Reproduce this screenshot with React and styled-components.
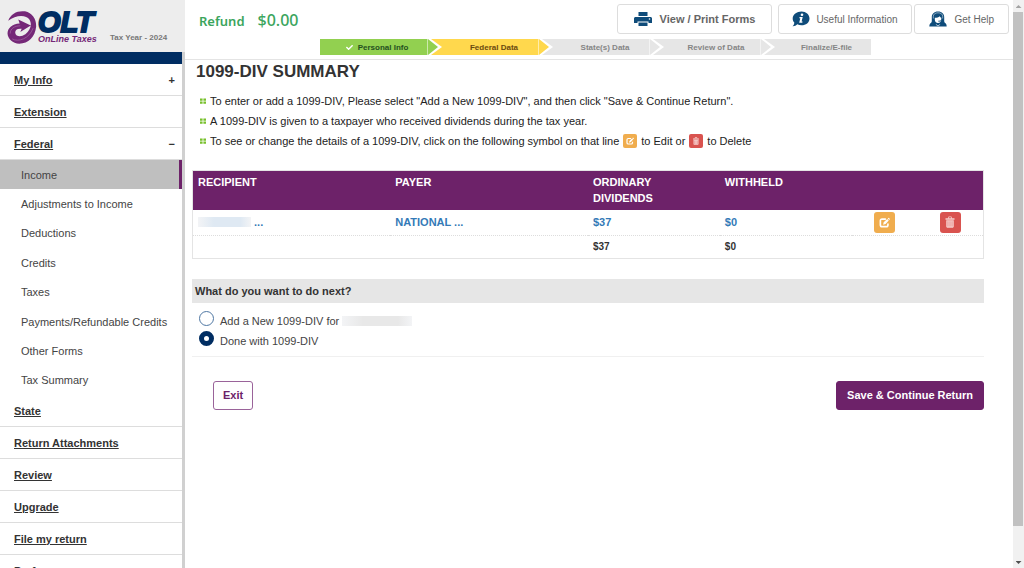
import { useState } from "react";
import styled, { createGlobalStyle } from "styled-components";
import { FaCheck } from "react-icons/fa";

const federalItems = [
  "Income",
  "Adjustments to Income",
  "Deductions",
  "Credits",
  "Taxes",
  "Payments/Refundable Credits",
  "Other Forms",
  "Tax Summary",
];

const lowerItems = [
  "State",
  "Return Attachments",
  "Review",
  "Upgrade",
  "File my return",
  "Preferences",
];

const steps = [
  { label: "Personal Info", bg: "#92d050", color: "#25501f", done: true },
  { label: "Federal Data", bg: "#ffd84d", color: "#6b4a10" },
  { label: "State(s) Data", bg: "#e6e6e6", color: "#858585" },
  { label: "Review of Data", bg: "#e6e6e6", color: "#858585" },
  { label: "Finalize/E-file", bg: "#e6e6e6", color: "#858585" },
];

function LogoMark() {
  return (
    <svg width="30" height="33" viewBox="20 33 86 98" aria-hidden="true">
      <path
        fill="#752878"
        d="M22 62C30 40 50 31 72 34C94 39 106 58 105 80C102 110 82 130 55 130C35 130 21 116 20 100C20 84 33 71 56 70L52 58L89 76L58 95L62 86C48 84 42 91 43 98C45 109 60 111 73 102C88 91 94 72 85 58C76 44 45 43 22 62Z"
      />
      <path
        fill="none"
        stroke="#a56ba6"
        strokeWidth="2"
        d="M28 100C28 86 40 77 58 77M34 116C52 126 84 116 96 84"
      />
    </svg>
  );
}

function PrintIcon() {
  return (
    <svg width="18" height="16" viewBox="0 0 18 16" aria-hidden="true">
      <path
        fill="#0f4c7a"
        d="M4.500 1H13.500V5H4.500ZM1.500 6H16.500C17.300 6 18 6.700 18 7.500V12H14.500V10.500H3.500V12H0V7.500C0 6.700 0.700 6 1.500 6ZM4.500 11.500H13.500V15H4.500Z"
      />
      <circle cx="15.500" cy="8" r="0.800" fill="#fff" />
    </svg>
  );
}

function InfoIcon() {
  return (
    <svg width="18" height="16" viewBox="0 0 18 16" aria-hidden="true">
      <path
        fill="#0f4c7a"
        d="M9.5 0.5C14 0.5 17.5 3.6 17.5 7.4C17.5 11.3 14 14.3 9.5 14.3C8 14.3 6.5 14 5.3 13.3C4.2 14.6 2.4 15.3 0.6 15.2C1.6 14.2 2.2 13 2.3 11.4C1.2 10.3 0.7 9 0.7 7.4C0.7 3.6 4.8 0.5 9.5 0.5Z"
      />
      <circle cx="10" cy="3.7" r="1.3" fill="#fff" />
      <path fill="#fff" d="M7.6 6H10.7L9.6 10.5H10.6L10.3 11.8H7.2L8.3 7.3H7.3Z" />
    </svg>
  );
}

function HelpIcon() {
  return (
    <svg width="18" height="16" viewBox="0 0 18 16" aria-hidden="true">
      <path
        fill="#0f4c7a"
        d="M9 0.5C5 0.5 2.8 3 2.8 6.2V9.8C2.8 11.3 2.2 12 1.2 12.6C0.6 13.3 0.3 14.3 0.3 15.500H17.7C17.7 14.3 17.4 13.3 16.8 12.6C15.8 12 15.2 11.3 15.2 9.8V6.2C15.2 3 13 0.5 9 0.5Z"
      />
      <path
        fill="#fff"
        d="M5.8 6.8C8 6.700 9.600 6.200 10.600 5.200C11.100 6 11.600 6.500 12.300 6.800V8.500C12.300 10.500 11 12 9 12C7 12 5.800 10.500 5.800 8.500Z"
      />
      <path
        fill="none"
        stroke="#0f4c7a"
        d="M12.8 8.5C12.3 9.8 11.4 10.2 9.4 10.2"
      />
      <path
        fill="none"
        stroke="#fff"
        strokeWidth="0.5"
        d="M4.300 7.500V5.500C4.300 3.200 6.200 1.800 9 1.800S13.700 3.200 13.700 5.500V7.500"
      />
      <path fill="#fff" d="M7 13.200L9 14.500L11 13.200L11.200 13.700L9.200 15.100H8.800L6.800 13.700Z" />
    </svg>
  );
}

function EditIcon({ size }) {
  return (
    <svg width={size} height={size} viewBox="0 0 16 16" aria-hidden="true">
      <path
        fill="none"
        stroke="#fff"
        strokeWidth="2.4"
        d="M10 3H4.500C3 3 2 4 2 5.500V11.500C2 13 3 14 4.500 14H10.500C12 14 13 13 13 11.500V9.500"
      />
      <path
        fill="#fff"
        d="M6 11.300L6.800 7.800L12 3L14.200 5.200L9.600 10.200ZM12.700 2.300L14 1L16 3L14.800 4.400Z"
      />
    </svg>
  );
}

function TrashIcon({ size }) {
  return (
    <svg width={size} height={size} viewBox="0 0 16 16" aria-hidden="true">
      <path
        fill="#f6cfcd"
        fillRule="evenodd"
        d="M2 3H5.500V1.500L6.300 0.700H9.700L10.500 1.500V3H14V5H2ZM6.500 3H9.500V1.800H6.500Z"
      />
      <path
        fill="#f6cfcd"
        fillRule="evenodd"
        d="M3 5.500H13V14.300L12 15.500H4L3 14.300ZM5 7V14H5.600V7ZM7.700 7V14H8.300V7ZM10.400 7V14H11V7Z"
      />
    </svg>
  );
}

function BulletIcon() {
  return (
    <svg width="6" height="6" viewBox="0 0 6 6" aria-hidden="true">
      <path
        fill="#78c02c"
        d="M0 0.500H2.600V2.700H0ZM3.400 0.500H6V2.700H3.400ZM0 3.500H2.600V5.700H0ZM3.400 3.500H6V5.700H3.400Z"
      />
    </svg>
  );
}

function Sidebar() {
  return (
    <Side>
      <Brand>
        <LogoMark />
        <BrandText>
          <BrandName>OLT</BrandName>
          <BrandSub>OnLine Taxes</BrandSub>
        </BrandText>
        <TaxYear>Tax Year - 2024</TaxYear>
      </Brand>
      <Nav>
        <NavBar />
        <NavRow>
          <NavLink href="#my-info">My Info</NavLink>
          <Sign>+</Sign>
        </NavRow>
        <NavRow>
          <NavLink href="#extension">Extension</NavLink>
        </NavRow>
        <NavRow>
          <NavLink href="#federal">Federal</NavLink>
          <Sign>−</Sign>
        </NavRow>
        <SubList>
          {federalItems.map((item, i) => (
            <SubLink key={item} href="#federal" $active={i === 0}>
              {item}
            </SubLink>
          ))}
        </SubList>
        {lowerItems.map((item) => (
          <NavRow key={item}>
            <NavLink href="#nav">{item}</NavLink>
          </NavRow>
        ))}
      </Nav>
    </Side>
  );
}

function TopBar() {
  return (
    <Header>
      <HeaderRow>
        <RefundLabel>Refund</RefundLabel>
        <RefundValue>$0.00</RefundValue>
        <Actions>
          <ActionButton type="button" $strong>
            <PrintIcon />
            View / Print Forms
          </ActionButton>
          <ActionButton type="button">
            <InfoIcon />
            Useful Information
          </ActionButton>
          <ActionButton type="button" $last>
            <HelpIcon />
            Get Help
          </ActionButton>
        </Actions>
      </HeaderRow>
      <Steps>
        {steps.map((step, i) => (
          <Step
            key={step.label}
            $bg={step.bg}
            $color={step.color}
            $first={i === 0}
            $last={i === steps.length - 1}
          >
            {step.done && <FaCheck size={7} color="#fff" />}
            {step.label}
          </Step>
        ))}
      </Steps>
    </Header>
  );
}

function SummaryTable() {
  return (
    <Table>
      <colgroup>
        <Col $span={3} />
        <Col $span={3} />
        <Col $span={2} />
        <Col $span={2} />
        <Col $span={1} />
        <Col $span={1} />
      </colgroup>
      <thead>
        <tr>
          <Th>RECIPIENT</Th>
          <Th>PAYER</Th>
          <Th>
            ORDINARY
            <br />
            DIVIDENDS
          </Th>
          <Th>WITHHELD</Th>
          <Th />
          <Th />
        </tr>
      </thead>
      <tbody>
        <Row>
          <Td>
            <RowLink href="#recipient">
              <Redacted $width="53px" $color="#dfe9f3" /> ...
            </RowLink>
          </Td>
          <Td>
            <RowLink href="#payer">NATIONAL ...</RowLink>
          </Td>
          <Td>
            <RowLink href="#dividends">$37</RowLink>
          </Td>
          <Td>
            <RowLink href="#withheld">$0</RowLink>
          </Td>
          <IconCell>
            <IconButton type="button" aria-label="Edit" $bg="#f0ad4e">
              <EditIcon size={11} />
            </IconButton>
          </IconCell>
          <IconCell>
            <IconButton type="button" aria-label="Delete" $bg="#d9534f">
              <TrashIcon size={12} />
            </IconButton>
          </IconCell>
        </Row>
        <TotalRow>
          <Td />
          <Td />
          <Td>$37</Td>
          <Td>$0</Td>
          <Td />
          <Td />
        </TotalRow>
      </tbody>
    </Table>
  );
}

function NextStep() {
  const [choice, setChoice] = useState("done");

  return (
    <Question>
      <Legend>What do you want to do next?</Legend>
      <Option>
        <Radio
          type="radio"
          name="next"
          checked={choice === "add"}
          onChange={() => setChoice("add")}
        />
        <OptionText>
          Add a New 1099-DIV for <Redacted $width="70px" $color="#e8e8e8" />
        </OptionText>
      </Option>
      <Option>
        <Radio
          type="radio"
          name="next"
          checked={choice === "done"}
          onChange={() => setChoice("done")}
        />
        <OptionText>Done with 1099-DIV</OptionText>
      </Option>
    </Question>
  );
}

function App() {
  return (
    <>
      <GlobalStyle />
      <Page>
        <Sidebar />
        <Main>
          <TopBar />
          <Content>
            <Title>1099-DIV SUMMARY</Title>
            <Bullets>
              <Bullet>
                <BulletIcon />
                To enter or add a 1099-DIV, Please select "Add a New 1099-DIV",
                and then click "Save &amp; Continue Return".
              </Bullet>
              <Bullet>
                <BulletIcon />A 1099-DIV is given to a taxpayer who received
                dividends during the tax year.
              </Bullet>
              <Bullet>
                <BulletIcon />
                To see or change the details of a 1099-DIV, click on the
                following symbol on that line
                <Badge $bg="#f0ad4e">
                  <EditIcon size={8} />
                </Badge>
                to Edit or
                <Badge $bg="#d9534f">
                  <TrashIcon size={8} />
                </Badge>
                to Delete
              </Bullet>
            </Bullets>
            <SummaryTable />
            <NextStep />
            <Footer>
              <ExitButton type="button">Exit</ExitButton>
              <SaveButton type="button">Save &amp; Continue Return</SaveButton>
            </Footer>
          </Content>
        </Main>
        <Scrollbar aria-hidden="true">
          <Arrow $up />
          <Thumb />
          <Arrow />
        </Scrollbar>
      </Page>
    </>
  );
}

const GlobalStyle = createGlobalStyle`
  * {
    box-sizing: border-box;
  }
  body {
    margin: 0;
    overflow: hidden;
    background: #fff;
    color: #333;
    font-family: "Liberation Sans", Arial, sans-serif;
    font-size: 11px;
  }
  button {
    font-family: inherit;
    cursor: pointer;
  }
`;

const Page = styled.div`
  display: flex;
  height: 100vh;
  overflow: hidden;
`;

/* Sidebar */
const Side = styled.aside`
  display: flex;
  flex-direction: column;
  flex: none;
  width: 185px;
  overflow: hidden;
`;
const Brand = styled.div`
  display: flex;
  flex: none;
  height: 52px;
  padding: 11px 0 0 7px;
  background: #ededed;
`;
const BrandText = styled.div`
  display: flex;
  flex-direction: column;
  width: 66px;
  padding-left: 1px;
`;
const BrandName = styled.div`
  font-size: 29px;
  font-weight: 700;
  font-style: italic;
  line-height: 23px;
  color: #002d62;
  -webkit-text-stroke: 2px #002d62;
`;
const BrandSub = styled.div`
  font-size: 9px;
  font-weight: 700;
  font-style: italic;
  line-height: 10px;
  white-space: nowrap;
  color: #752878;
`;
const TaxYear = styled.div`
  padding: 22px 0 0 7px;
  font-size: 8px;
  font-weight: 700;
  line-height: 10px;
  white-space: nowrap;
  color: #777;
`;
const Nav = styled.nav`
  flex: 1;
  border-right: 3px solid #d0d0d0;
`;
const NavBar = styled.div`
  height: 12px;
  background: #002d62;
`;
const NavRow = styled.div`
  display: flex;
  align-items: center;
  justify-content: space-between;
  height: 32px;
  padding: 0 7px 0 14px;
  border-bottom: 1px solid #ddd;
`;
const NavLink = styled.a`
  font-size: 11px;
  font-weight: 700;
  color: #333;
`;
const Sign = styled.span`
  font-weight: 700;
`;
const SubList = styled.div`
  display: grid;
  grid-auto-rows: 1fr;
  height: 235px;
`;
const SubLink = styled.a`
  display: flex;
  align-items: center;
  padding-left: 21px;
  color: #444;
  text-decoration: none;
  background: ${(p) => (p.$active ? "#bfbfbf" : "transparent")};
  border-right: ${(p) => (p.$active ? "3px solid #6d2269" : "none")};
`;

/* Header */
const Main = styled.main`
  flex: 1;
  min-width: 0;
`;
const Header = styled.header`
  height: 60px;
  padding-top: 4px;
  border-bottom: 1px solid #e4e4e4;
`;
const HeaderRow = styled.div`
  display: flex;
  align-items: center;
  height: 30px;
  padding: 0 4px 0 14px;
  font-family: "Noto Sans", sans-serif;
  color: #3ba55d;
`;
const RefundLabel = styled.span`
  font-size: 13px;
  font-weight: 600;
  line-height: 20px;
  padding-top: 4px;
`;
const RefundValue = styled.span`
  margin-left: 13px;
  font-size: 16px;
  font-weight: 500;
  line-height: 20px;
  padding-top: 2px;
`;
const Actions = styled.div`
  display: flex;
  margin-left: auto;
  gap: 6px;
`;
const ActionButton = styled.button`
  display: flex;
  align-items: center;
  gap: ${(p) => (p.$strong || p.$last ? "8px" : "6px")};
  height: 30px;
  margin-left: ${(p) => (p.$last ? "-4px" : "0")};
  padding: 0 ${(p) => (p.$strong ? "16px" : p.$last ? "14px" : "13px")};
  border: 1px solid #ddd;
  border-radius: 3px;
  background: #fff;
  color: #666;
  font-family: "Liberation Sans", Arial, sans-serif;
  font-size: ${(p) => (p.$strong ? "11px" : "10px")};
  font-weight: ${(p) => (p.$strong ? 700 : 400)};
  white-space: nowrap;
`;
/* each step after the first slides 7px under the tip before it */
const Steps = styled.div`
  display: grid;
  grid-template-columns: 118fr repeat(3, 111fr) 100fr;
  margin: 5px 142px 0 135px;
`;
const Step = styled.div`
  display: flex;
  align-items: center;
  justify-content: center;
  gap: 5px;
  height: 16px;
  margin-left: ${(p) => (p.$first ? "0" : "-7px")};
  padding-left: ${(p) => (p.$first ? "0" : p.$last ? "18px" : "8px")};
  padding-right: ${(p) => (p.$first ? "4px" : "0")};
  background: ${(p) =>
    p.$last
      ? p.$bg
      : `linear-gradient(#fff8, #fff8) right 10px top / 1px 100% no-repeat ${p.$bg}`};
  color: ${(p) => p.$color};
  font-size: 8px;
  font-weight: 700;
  white-space: nowrap;
  clip-path: polygon(
    0 0,
    ${(p) => (p.$last ? "100%" : "calc(100% - 10px)")} 0,
    100% ${(p) => (p.$last ? "0" : "50%")},
    ${(p) => (p.$last ? "100%" : "calc(100% - 10px)")} 100%,
    0 100%,
    ${(p) => (p.$first ? "0" : "11px")} 50%
  );
`;

/* Content */
const Content = styled.div`
  padding: 0 29px 0 7px;
`;
const Title = styled.h1`
  margin: 0;
  padding: 1px 0 0 4px;
  font-size: 17px;
  line-height: 22px;
`;
const Bullets = styled.ul`
  margin: 8px 0 19px;
  padding: 0 0 0 8px;
  list-style: none;
`;
const Bullet = styled.li`
  display: flex;
  align-items: center;
  gap: 4px;
  height: 20px;
  color: #222;
`;
const Badge = styled.span`
  display: flex;
  align-items: center;
  justify-content: center;
  width: 14px;
  height: 14px;
  border-radius: 2px;
  background: ${(p) => p.$bg};
`;
const Table = styled.table`
  width: 100%;
  table-layout: fixed;
  border-collapse: collapse;
  border: 1px solid #e4e4e4;
  font-weight: 700;
`;
const Col = styled.col`
  width: calc(100% / 12 * ${(p) => p.$span});
`;
const Th = styled.th`
  padding: 3px 5px 4px;
  background: #6d2269;
  color: #fff;
  font-size: 11px;
  line-height: 16px;
  text-align: left;
  vertical-align: top;
`;
const Row = styled.tr`
  height: 25px;
  border-bottom: 1px dotted #ddd;
`;
const TotalRow = styled.tr`
  height: 23px;
  font-size: 10px;
`;
const Td = styled.td`
  padding: 0 5px;
`;
const IconCell = styled.td`
  padding: 1px 0;
  text-align: center;
`;
const RowLink = styled.a`
  color: #337ab7;
  text-decoration: none;
`;
const Redacted = styled.span`
  display: inline-block;
  width: ${(p) => p.$width};
  height: 10px;
  vertical-align: -1px;
  background: linear-gradient(
    90deg,
    #f3f4f6,
    ${(p) => p.$color} 30%,
    ${(p) => p.$color} 80%,
    #f3f4f6
  );
`;
const IconButton = styled.button`
  display: inline-flex;
  align-items: center;
  justify-content: center;
  width: 21px;
  height: 21px;
  padding: 0;
  border: none;
  border-radius: 3px;
  vertical-align: middle;
  background: ${(p) => p.$bg};
`;
const Question = styled.fieldset`
  margin: 20px 0 0;
  padding: 0 0 6px;
  border: none;
  border-bottom: 1px solid #f0f0f0;
`;
const Legend = styled.legend`
  width: 100%;
  height: 24px;
  margin-bottom: 7px;
  padding: 0 3px;
  background: #e6e6e6;
  font-size: 11px;
  font-weight: 700;
  line-height: 24px;
`;
const Option = styled.label`
  display: flex;
  height: 20px;
  padding-left: 7px;
  gap: 6px;
  color: #444;
`;
const OptionText = styled.span`
  padding-top: 3px;
  line-height: 16px;
`;
const Radio = styled.input`
  appearance: none;
  width: 15px;
  height: 15px;
  margin: 1px 0 0;
  border: 1px solid #4f77a3;
  border-radius: 50%;
  background: #fff;
  &:checked {
    border: 5px solid #002d62;
  }
`;
const Footer = styled.div`
  display: flex;
  justify-content: space-between;
  margin-top: 24px;
  padding-left: 21px;
`;
const ExitButton = styled.button`
  height: 29px;
  padding: 0 9px;
  border: 1px solid #9a639a;
  border-radius: 3px;
  background: #fff;
  color: #6d2269;
  font-size: 11px;
  font-weight: 700;
`;
const SaveButton = styled(ExitButton)`
  padding: 0 10px;
  border-color: #6d2269;
  background: #6d2269;
  color: #fff;
`;

/* Scrollbar */
const Scrollbar = styled.div`
  display: flex;
  flex-direction: column;
  flex: none;
  width: 11px;
  background: #f1f1f1;
`;
const Arrow = styled.div`
  height: 12px;
  &::after {
    content: "";
    display: block;
    margin: 0 auto;
    width: 6px;
    padding-top: 5px;
    border-bottom: 3px solid ${(p) => (p.$up ? "#a3a3a3" : "#505050")};
    clip-path: ${(p) =>
      p.$up
        ? "polygon(50% 5px, 100% 100%, 0 100%)"
        : "polygon(0 5px, 100% 5px, 50% 100%)"};
  }
`;
const Thumb = styled.div`
  flex: 1;
  margin: 0 1px 30px 0;
  background: #c1c1c1;
`;

export default App;
